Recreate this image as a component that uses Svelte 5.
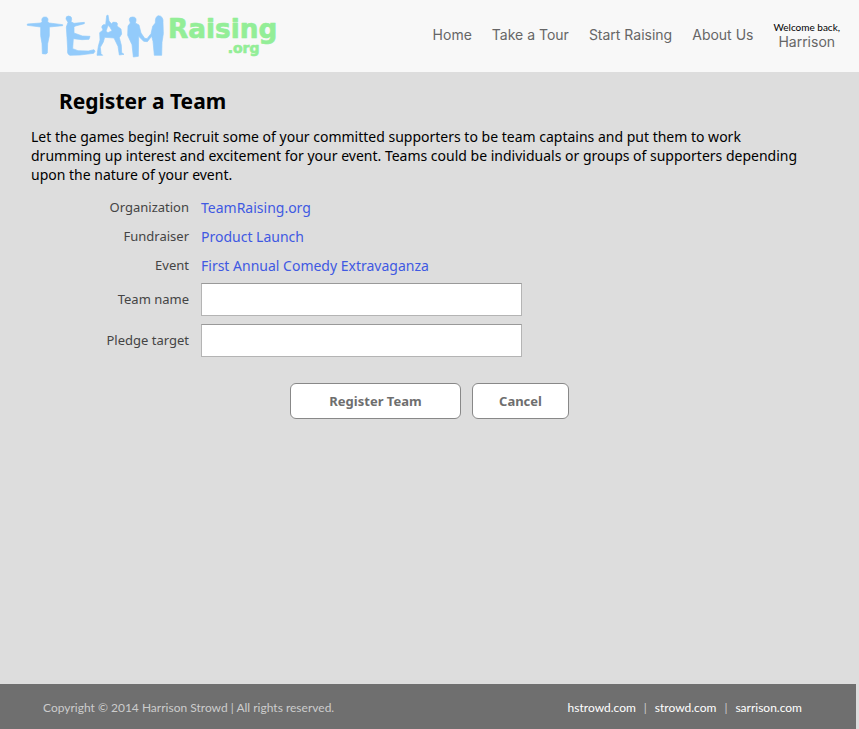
<script>
  const nav = ['Home', 'Take a Tour', 'Start Raising', 'About Us'];
  const details = [
    ['Organization', 'TeamRaising.org'],
    ['Fundraiser', 'Product Launch'],
    ['Event', 'First Annual Comedy Extravaganza']
  ];
  const sites = ['hstrowd.com', 'strowd.com', 'sarrison.com'];
  let teamName = $state('');
  let pledgeTarget = $state('');
</script>

<div class="page">
  <header>
    <a class="logo" href="/" aria-label="TeamRaising.org">
      <svg viewBox="0 0 810 180" width="270" height="60">
        <g fill="#93cbfb" stroke="#93cbfb" stroke-width="2" stroke-linejoin="round">
          <path d="M22 57L62 54 66 50Q63 36 75 36Q87 36 83 50L88 54 128 59 128 62 88 66 88 92 83 116 82 144Q80 149 67 146L66 116 62 92 62 66 22 61Z" />
          <path d="M138 42Q137 33 146 33Q156 34 155 43L153 50 162 55 193 52 193 56 166 63 162 67 162 84 187 93 210 94 207 103 186 104 160 101 158 131 174 137 205 138 222 134 225 139 221 145 180 150 149 151Q140 147 143 132L141 98 139 66 144 52Z" />
          <path d="M260 32L264 30 267 48 275 57Q277 49 286 52Q295 52 291 63L303 72 305 87 298 98 304 121 305 143 312 148 298 150 294 124 282 99 254 97 250 111 241 127 243 146 248 151 231 151 235 124 240 105 239 83 249 75 245 66Q247 57 257 59ZM264 61L258 79 264 83 276 77 270 67Z" fill-rule="evenodd" />
          <path d="M328 44Q328 35 338 36Q350 36 348 48L346 54 357 60 363 84 374 100 381 101 393 86 398 64 406 54Q405 35 415 32Q431 33 429 53L430 86 426 112 425 151 403 151 399 109 395 94 382 110 371 109 356 94 355 154 340 156 336 119 323 91 324 63 331 54Z" />
        </g>
        <g fill="#93ee97" stroke="#93ee97" stroke-width="2" stroke-linejoin="round" font-family="'DejaVu Sans', sans-serif" font-weight="bold">
          <text x="444" y="98" font-size="79">Raising</text>
          <text x="623" y="144" font-size="42">.org</text>
        </g>
      </svg>
    </a>
    <nav>
      {#each nav as item}<a href="#{item}">{item}</a>{/each}
      <div class="user"><span>Welcome back,</span><a href="#account">Harrison</a></div>
    </nav>
  </header>

  <main>
    <h1>Register a Team</h1>
    <p>Let the games begin! Recruit some of your committed supporters to be team captains and put them to work drumming up interest and excitement for your event. Teams could be individuals or groups of supporters depending upon the nature of your event.</p>
    <form onsubmit={(e) => e.preventDefault()}>
      {#each details as [label, value]}
        <div class="row"><span class="label">{label}</span><a href="#{label}">{value}</a></div>
      {/each}
      <div class="row field"><label class="label" for="team">Team name</label><input id="team" type="text" bind:value={teamName} /></div>
      <div class="row field"><label class="label" for="pledge">Pledge target</label><input id="pledge" type="text" bind:value={pledgeTarget} /></div>
      <div class="actions"><button class="primary" type="submit">Register Team</button><button type="button">Cancel</button></div>
    </form>
  </main>

  <footer>
    <span>Copyright © 2014 Harrison Strowd | All rights reserved.</span>
    <div class="sites">
      {#each sites as site, i}{#if i}<i>|</i>{/if}<a href="https://{site}">{site}</a>{/each}
    </div>
  </footer>
</div>

<style>
  :global(body) { background: #ddd; }
  .page { min-height: 100vh; display: flex; flex-direction: column; font: 14px/19px 'Noto Sans', sans-serif; color: #000; }
  a { text-decoration: none; color: #4059e2; }
  header { display: flex; justify-content: space-between; height: 72px; box-sizing: border-box; padding: 5px 19px 0 20px; background: #f8f8f8; }
  .logo, svg { display: block; }
  nav { display: flex; gap: 20px; padding-top: 20px; font: 14px/20px 'Inter', sans-serif; white-space: nowrap; }
  nav a { color: #666; }
  .user { display: flex; flex-direction: column; align-items: center; margin-top: -4px; }
  .user span { font: 10px/13px 'Lato', sans-serif; }
  .user a { line-height: 16px; }
  main { flex: 1; padding: 16px 31px 0; }
  h1 { margin: 0 28px; font: bold 21px/27px 'Noto Sans', sans-serif; }
  p { margin: 12px 0 14px; padding-right: 16px; }
  .row { display: flex; align-items: center; gap: 12px; height: 19px; margin-bottom: 10px; }
  .label { width: 158px; text-align: right; font-size: 13px; color: #444; }
  .row:has(+ .field) { margin-bottom: 8px; }
  .field { height: 33px; }
  input { width: 321px; height: 33px; box-sizing: border-box; padding: 4px 8px; border: 1px solid #b4b4b4; border-top-color: #999; border-radius: 0; background: #fff; font: inherit; }
  .actions { display: flex; justify-content: center; gap: 11px; padding-top: 16px; }
  button { width: 97px; height: 36px; padding: 0; border: 1px solid #888; border-radius: 6px; background: #fff; color: #6e6e6e; font: bold 13px/18px 'Noto Sans', sans-serif; }
  .primary { width: 171px; }
  footer { display: flex; justify-content: space-between; align-items: center; height: 45px; margin-right: 3px; padding: 2px 54px 0 43px; box-sizing: border-box; background: #6f6f6f; color: #ccc; font: 12px/16px 'Lato', sans-serif; }
  .sites { display: flex; gap: 8px; }
  .sites a { color: #fff; }
  i { font-style: normal; }
</style>
